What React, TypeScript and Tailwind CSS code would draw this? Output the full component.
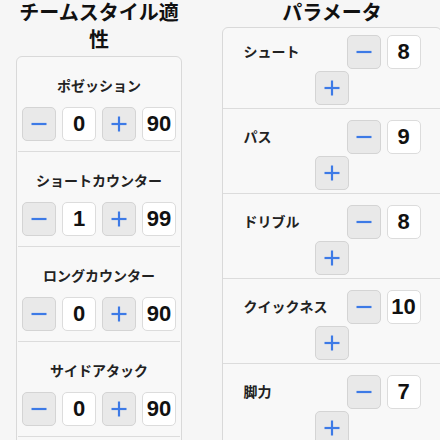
import React from "react"

const FONT = { fontFamily: '"Liberation Sans", "Noto Sans CJK JP", sans-serif' }

const MinusIcon = () => (
  <svg width="16" height="16" viewBox="0 0 16 16">
    <line x1="0.5" y1="8" x2="15.5" y2="8" stroke="#3d7ae6" strokeWidth="2.2" />
  </svg>
)

const PlusIcon = () => (
  <svg width="16" height="16" viewBox="0 0 16 16">
    <line x1="0.5" y1="8" x2="15.5" y2="8" stroke="#3d7ae6" strokeWidth="2.2" />
    <line x1="8" y1="0.5" x2="8" y2="15.5" stroke="#3d7ae6" strokeWidth="2.2" />
  </svg>
)

const StepButton = ({ kind }: { kind: "minus" | "plus" }) => (
  <button className="flex h-[34px] w-[34px] shrink-0 items-center justify-center rounded-[5px] border border-[#d4d4d4] bg-[#e9e9e9]">
    {kind === "minus" ? <MinusIcon /> : <PlusIcon />}
  </button>
)

const ValueBox = ({ value }: { value: number }) => (
  <div className="flex h-[34px] w-[34px] shrink-0 items-center justify-center rounded-[5px] border border-[#dcdcdc] bg-white text-[22px] font-bold leading-none text-[#111]">
    {value}
  </div>
)

const teamStyles = [
  { name: "ポゼッション", value: 0, max: 90 },
  { name: "ショートカウンター", value: 1, max: 99 },
  { name: "ロングカウンター", value: 0, max: 90 },
  { name: "サイドアタック", value: 0, max: 90 },
]

const params = [
  { name: "シュート", value: 8 },
  { name: "パス", value: 9 },
  { name: "ドリブル", value: 8 },
  { name: "クイックネス", value: 10 },
  { name: "脚力", value: 7 },
]

export default function App() {
  return (
    <div className="h-[440px] w-[440px] overflow-hidden bg-[#f6f6f6]" style={FONT}>
      <div className="flex w-[480px] items-start">
        {/* team style column */}
        <div className="ml-[16px] w-[166px] shrink-0">
          <h2 className="mb-[2px] text-center text-[20px] font-bold leading-[27px] text-[#111]">
            チームスタイル適性
          </h2>
          <div className="rounded-[6px] border border-[#d9d9d9] bg-[#f8f8f8] px-[1px] pb-[60px]">
            {teamStyles.map((s) => (
              <div key={s.name} className="border-b border-[#dcdcdc] pb-[10px] pt-[19px]">
                <div className="h-[20px] text-center text-[14px] font-bold leading-[20px] text-[#222]">
                  {s.name}
                </div>
                <div className="mt-[11px] flex justify-center gap-[6px]">
                  <StepButton kind="minus" />
                  <ValueBox value={s.value} />
                  <StepButton kind="plus" />
                  <ValueBox value={s.max} />
                </div>
              </div>
            ))}
          </div>
        </div>

        {/* parameter column */}
        <div className="ml-[40px] w-[220px] shrink-0">
          <h2 className="text-center text-[20px] font-bold leading-[27px] text-[#111]">パラメータ</h2>
          <div className="rounded-[6px] border border-[#d9d9d9] bg-[#f8f8f8] pb-[60px]">
            {params.map((p, i) => (
              <div
                key={p.name}
                className={`flex flex-wrap items-center justify-center gap-x-[6px] gap-y-[2px] border-b border-[#dcdcdc] px-[4px] pb-[3px] ${i === 0 ? "pt-[7px]" : "pt-[11px]"}`}
              >
                <div className="w-[97px] text-[14px] font-bold leading-[20px] text-[#222]">{p.name}</div>
                <StepButton kind="minus" />
                <ValueBox value={p.value} />
                <StepButton kind="plus" />
              </div>
            ))}
          </div>
        </div>
      </div>
    </div>
  )
}
